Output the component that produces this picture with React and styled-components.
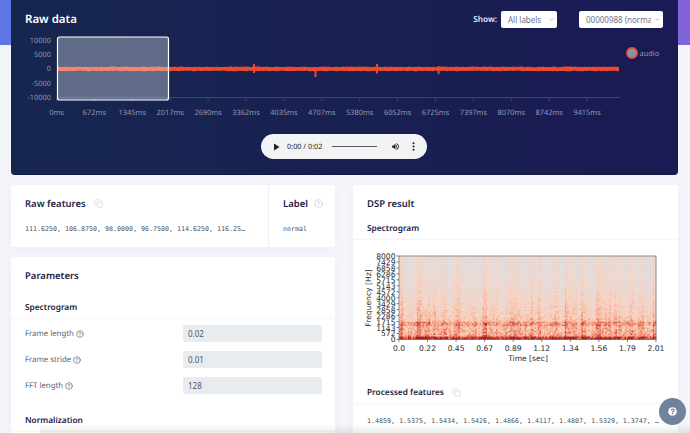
import React, { useMemo } from "react";
import styled, { createGlobalStyle } from "styled-components";
import { ChevronDown, CircleHelp, Copy } from "lucide-react";
import { FaQuestionCircle } from "react-icons/fa";

const GlobalStyle = createGlobalStyle`
  html, body {
    margin: 0;
    padding: 0;
    background: #f3f5fa;
    font-family: "Noto Sans", "Open Sans", sans-serif;
    text-rendering: geometricPrecision;
  }
`;

// Page shell
const Page = styled.div`
  position: relative;
  width: 690px;
  height: 433px;
  overflow: hidden;
  box-sizing: border-box;
  padding: 0 12px 0 11px;
  background: linear-gradient(90deg, #5f76e6, #8263dc) top / 100% 45px no-repeat,
    #f3f5fa;
`;

// Raw data panel
const Hero = styled.section`
  height: 175px;
  box-sizing: border-box;
  background: linear-gradient(90deg, #16274f, #1b1a54);
  border-bottom: 1px solid #111a3f;
  border-radius: 0 0 4px 4px;
`;

const HeroHeader = styled.div`
  display: flex;
  align-items: center;
  height: 38px;
  margin-bottom: -8px;
  padding: 0 15px 0 14px;
`;

const HeroTitle = styled.h1`
  flex: 1;
  margin: 0;
  font-size: 11.5px;
  font-weight: 600;
  color: #fff;
`;

const ShowLabel = styled.span`
  margin-right: 4px;
  font-size: 8.2px;
  font-weight: 600;
  color: #e6e8f0;
`;

const SelectWrap = styled.div`
  position: relative;
  width: ${(p) => p.$width}px;
  height: 17px;
  margin-left: ${(p) => p.$gap || 0}px;
`;

const Select = styled.select`
  display: block;
  width: 100%;
  height: 100%;
  padding: 0 12px 0 7px;
  border: none;
  border-radius: 2px;
  background: #fff;
  appearance: none;
  color: #6c7486;
  font-family: "Noto Sans", sans-serif;
  font-size: 8px;
`;

const SelectChevron = styled(ChevronDown)`
  position: absolute;
  top: 5px;
  right: 2px;
  color: #8a90a0;
  pointer-events: none;
`;

const ChartSvg = styled.svg`
  display: block;
  width: 667px;
  height: 96px;
`;

const Player = styled.div`
  display: flex;
  align-items: center;
  width: 166px;
  height: 25px;
  box-sizing: border-box;
  margin: 8px auto 0 250px;
  padding: 0 12.5px 0 12px;
  border-radius: 13px;
  background: #f1f3f4;
`;

const PlayerTime = styled.span`
  margin-left: 7px;
  font-size: 7.3px;
  color: #202124;
  white-space: nowrap;
`;

const PlayerTrack = styled.div`
  flex: 1;
  height: 1.5px;
  margin: 0 13.5px 0 10px;
  background: #55585c;
`;

const PlayerIcon = styled.svg`
  display: block;
  flex: none;
  margin-right: ${(p) => p.$gap || 0}px;
`;

// Lower columns
const Columns = styled.div`
  display: grid;
  grid-template-columns: 324px 325px;
  column-gap: 18px;
  margin-top: 10px;
`;

const Column = styled.div`
  display: flex;
  flex-direction: column;
  gap: 10px;
`;

const Card = styled.section`
  background: #fff;
  border-radius: 3px;
  box-shadow: 0 2px 10px rgba(40, 50, 90, 0.03);
`;

const FeaturesCard = styled(Card)`
  display: flex;
  height: 62px;
`;

const FeatureCell = styled.div`
  box-sizing: border-box;
  width: ${(p) => p.$width}px;
  padding: 10px 14px 0;
  border-right: ${(p) => (p.$divider ? "1px solid #eef0f4" : "none")};
`;

const CardTitle = styled.h2`
  display: flex;
  align-items: center;
  gap: 6px;
  height: 16px;
  margin: 0;
  font-size: 9.5px;
  font-weight: 600;
  color: #1d2443;
`;

const MonoText = styled.div`
  margin-top: 12px;
  overflow: hidden;
  font-family: "DejaVu Sans Mono", "Liberation Mono", monospace;
  font-size: 6.65px;
  line-height: 12px;
  color: #4a4f60;
  white-space: nowrap;
  text-overflow: ellipsis;
`;

const ParamsCard = styled(Card)`
  height: 176px;
  padding: 10px 0 0;
`;

const ParamsTitle = styled(CardTitle)`
  padding: 0 14px;
`;

const SectionTitle = styled.h3`
  display: flex;
  align-items: center;
  gap: 6px;
  height: 22px;
  margin: ${(p) => p.$top || 0}px 0 0;
  padding: 0 14px;
  border-bottom: 1px solid #f5f6f9;
  font-size: 8.3px;
  font-weight: 600;
  color: #1d2443;
`;

const Rows = styled.div`
  display: flex;
  flex-direction: column;
  gap: 9px;
  padding: 6px 13px 0 14px;
`;

const Row = styled.div`
  display: flex;
  align-items: center;
  justify-content: space-between;
`;

const RowLabel = styled.label`
  display: flex;
  align-items: center;
  gap: 2px;
  font-size: 7.8px;
  color: #5b6272;
`;

const RowInput = styled.input`
  width: 139px;
  height: 17px;
  box-sizing: border-box;
  padding: 0 5px;
  border: none;
  border-radius: 2px;
  background: #e9ecef;
  font-family: "Noto Sans", sans-serif;
  font-size: 8px;
  color: #4f566b;
`;

const DspCard = styled(Card)`
  height: 248px;
  padding-top: 10px;
`;

const DspTitle = styled(CardTitle)`
  padding: 0 14px;
`;

const SpectrogramSvg = styled.svg`
  display: block;
  width: 325px;
  height: 126px;
`;

const ProcessedText = styled(MonoText)`
  margin: 11px 17px 0 14px;
`;

const HintIcon = styled(CircleHelp)`
  flex: none;
  color: ${(p) => p.$color || "#5b6272"};
`;

const CopyIcon = styled(Copy)`
  flex: none;
  margin-left: 2px;
  color: #d6d9e0;
`;

// Things floating over the page
const HelpButton = styled.button`
  position: absolute;
  top: 398px;
  left: 659px;
  display: flex;
  align-items: center;
  justify-content: center;
  width: 27px;
  height: 27px;
  padding: 0;
  border: none;
  border-radius: 50%;
  background: #70839a;
  color: #fff;
`;

const BottomFade = styled.div`
  position: absolute;
  right: 0;
  bottom: 0;
  left: 40px;
  height: 9px;
  background: linear-gradient(180deg, rgba(60, 60, 70, 0), rgba(60, 60, 70, 0.1));
`;

const TIME_LABELS = [
  "0ms", "672ms", "1345ms", "2017ms", "2690ms", "3362ms", "4035ms", "4707ms",
  "5380ms", "6052ms", "6725ms", "7397ms", "8070ms", "8742ms", "9415ms",
];
const AMPLITUDES = [
  ["10000", 40], ["5000", 54.5], ["0", 68.5], ["-5000", 83], ["-10000", 97.5],
];
const FREQUENCIES = [
  "8000", "7429", "6858", "6286", "5715", "5143", "4572", "4000",
  "3429", "2858", "2286", "1715", "1143", "572", "0",
];
const SECONDS = ["0.0", "0.22", "0.45", "0.67", "0.89", "1.12", "1.34", "1.56", "1.79", "2.01"];
const SPIKES = [[254, 64, 73], [315.5, 67, 77], [377, 64, 73.5], [438.5, 66, 74]];

// Small seeded generator so the noise is the same on each render
const seeded = (seed) => () => {
  seed = (seed + 0x6d2b79f5) | 0;
  let t = Math.imul(seed ^ (seed >>> 15), 1 | seed);
  t = (t + Math.imul(t ^ (t >>> 7), 61 | t)) ^ t;
  return ((t ^ (t >>> 14)) >>> 0) / 4294967296;
};

const STOPS = [
  [0, [208, 214, 228]],
  [0.3, [226, 218, 218]],
  [0.5, [248, 208, 188]],
  [0.68, [247, 170, 142]],
  [0.84, [232, 96, 72]],
  [1, [160, 30, 26]],
];

const heatColor = (v) => {
  const value = Math.min(1, Math.max(0, v));
  let i = 0;
  while (i < STOPS.length - 2 && value > STOPS[i + 1][0]) i++;
  const [a, ca] = STOPS[i];
  const [b, cb] = STOPS[i + 1];
  const k = (value - a) / (b - a);
  const mix = ca.map((c, n) => Math.round(c + (cb[n] - c) * k));
  return `rgb(${mix.join(",")})`;
};

const buildCells = () => {
  const rand = seeded(988);
  const cols = 172;
  const rows = 56;
  const w = 257 / cols;
  const h = 83.5 / rows;
  // thin soft stripes with grey gaps between them
  const stripes = [];
  while (stripes.length < cols) {
    const level = rand();
    const run = 1 + Math.floor(rand() * 3);
    for (let i = 0; i < run; i++) stripes.push(level);
  }
  const cells = [];
  for (let c = 0; c < cols; c++) {
    const stripe = stripes[c] * stripes[c];
    for (let r = 0; r < rows; r++) {
      const depth = r / (rows - 1);
      let v = 0.28 + stripe * 0.2 + depth * depth * 0.38;
      v += (rand() - 0.5) * (0.04 + depth * 0.3);
      if (r >= 44 && r <= 46) v += 0.14;
      if (r >= 54) v += 0.2 + rand() * 0.12;
      cells.push(
        <rect
          key={`${c}-${r}`}
          x={399 + c * w}
          y={255 + r * h}
          width={w + 0.3}
          height={h + 0.3}
          fill={heatColor(v)}
        />
      );
    }
  }
  return cells;
};

const buildWave = () => {
  const rand = seeded(42);
  let top = "M57 68";
  let bottom = "";
  for (let x = 57; x <= 620; x += 2) {
    top += `L${x} ${(67.2 - rand() * 0.7).toFixed(1)}`;
    bottom = `L${x} ${(70.6 + rand() * 0.7).toFixed(1)}` + bottom;
  }
  return `${top}${bottom}Z`;
};

function WaveChart() {
  const wave = useMemo(buildWave, []);
  return (
    <ChartSvg viewBox="11 30 667 96">
      <line x1="57" x2="620" y1="97.5" y2="97.5" stroke="#39456e" />
      {TIME_LABELS.map((label, i) => (
        <g key={label}>
          <line
            x1={56.5 + i * 37.9}
            x2={56.5 + i * 37.9}
            y1="97.5"
            y2="101"
            stroke="#39456e"
          />
          <text
            x={56.5 + i * 37.9}
            y="114.5"
            textAnchor="middle"
            fontFamily="Noto Sans, sans-serif"
            fontSize="7.4"
            fill="#9199b1"
          >
            {label}
          </text>
        </g>
      ))}
      {AMPLITUDES.map(([label, y]) => (
        <text
          key={label}
          x="51"
          y={y + 2.6}
          textAnchor="end"
          fontFamily="Noto Sans, sans-serif"
          fontSize="7.4"
          fill="#9199b1"
        >
          {label}
        </text>
      ))}
      <path d={wave} fill="#ec4a2e" />
      {SPIKES.map(([x, y1, y2]) => (
        <line key={x} x1={x} x2={x} y1={y1} y2={y2} stroke="#ec4a2e" strokeWidth="2" />
      ))}
      <rect
        x="57.5"
        y="37"
        width="111"
        height="63"
        rx="2"
        fill="#fff"
        fillOpacity="0.32"
        stroke="#fff"
        strokeWidth="1.2"
      />
      <circle cx="632" cy="53" r="5.2" fill="#8a93a8" stroke="#ec4a2e" strokeWidth="1.6" />
      <text
        x="639.5"
        y="55.5"
        fontFamily="Noto Sans, sans-serif"
        fontSize="7.4"
        fill="#9199b1"
      >
        audio
      </text>
    </ChartSvg>
  );
}

function Spectrogram() {
  const cells = useMemo(buildCells, []);
  const tickFont = {
    fontFamily: "DejaVu Sans, sans-serif",
    fontSize: 7.6,
    fill: "#2a2a2a",
  };
  return (
    <SpectrogramSvg viewBox="353 239 325 126">
      <filter id="soften">
        <feGaussianBlur stdDeviation="0.35" />
      </filter>
      <g filter="url(#soften)">{cells}</g>
      <rect x="399" y="255" width="257" height="83.5" fill="none" stroke="#777" strokeWidth="0.8" />
      {FREQUENCIES.map((label, i) => (
        <g key={label}>
          <line
            x1="396.5"
            x2="399"
            y1={255 + i * 5.96}
            y2={255 + i * 5.96}
            stroke="#333"
            strokeWidth="0.6"
          />
          <text x="395.5" y={258 + i * 5.96} textAnchor="end" {...tickFont}>
            {label}
          </text>
        </g>
      ))}
      {SECONDS.map((label, i) => (
        <g key={label}>
          <line
            x1={399 + i * 28.55}
            x2={399 + i * 28.55}
            y1="338.5"
            y2="341"
            stroke="#333"
            strokeWidth="0.6"
          />
          <text x={399 + i * 28.55} y="350" textAnchor="middle" {...tickFont}>
            {label}
          </text>
        </g>
      ))}
      <text x="528" y="360" textAnchor="middle" {...tickFont}>
        Time [sec]
      </text>
      <text
        transform="translate(371 297) rotate(-90)"
        textAnchor="middle"
        {...tickFont}
      >
        Frequency [Hz]
      </text>
    </SpectrogramSvg>
  );
}

function AudioPlayer() {
  return (
    <Player>
      <PlayerIcon width="7" height="8" viewBox="0 0 7 8">
        <path d="M1 0.5 L6.5 4 L1 7.5 Z" fill="#202124" />
      </PlayerIcon>
      <PlayerTime>0:00 / 0:02</PlayerTime>
      <PlayerTrack />
      <PlayerIcon width="9" height="9" viewBox="0 0 24 24" $gap={12}>
        <path
          d="M3 9v6h4l5 5V4L7 9H3zm13.5 3A4.5 4.5 0 0 0 14 8v8a4.5 4.5 0 0 0 2.5-4zM14 3.2v2.1a7 7 0 0 1 0 13.4v2.1a9 9 0 0 0 0-17.6z"
          fill="#202124"
        />
      </PlayerIcon>
      <PlayerIcon width="3" height="9" viewBox="0 0 3 9">
        <circle cx="1.5" cy="1.2" r="1" fill="#202124" />
        <circle cx="1.5" cy="4.5" r="1" fill="#202124" />
        <circle cx="1.5" cy="7.8" r="1" fill="#202124" />
      </PlayerIcon>
    </Player>
  );
}

const PARAMETERS = [
  ["Frame length", "0.02"],
  ["Frame stride", "0.01"],
  ["FFT length", "128"],
];

export default function App() {
  return (
    <Page>
      <GlobalStyle />

      <Hero>
        <HeroHeader>
          <HeroTitle>Raw data</HeroTitle>
          <ShowLabel>Show:</ShowLabel>
          <SelectWrap $width={56}>
            <Select defaultValue="all">
              <option value="all">All labels</option>
            </Select>
            <SelectChevron size={7} />
          </SelectWrap>
          <SelectWrap $width={84} $gap={22}>
            <Select defaultValue="988">
              <option value="988">00000988 (normal)</option>
            </Select>
            <SelectChevron size={7} />
          </SelectWrap>
        </HeroHeader>
        <WaveChart />
        <AudioPlayer />
      </Hero>

      <Columns>
        <Column>
          <FeaturesCard>
            <FeatureCell $width={258} $divider>
              <CardTitle>
                Raw features
                <CopyIcon size={9} />
              </CardTitle>
              <MonoText>
                111.6250, 106.8750, 98.0000, 96.7500, 114.6250, 116.25…
              </MonoText>
            </FeatureCell>
            <FeatureCell $width={66}>
              <CardTitle>
                Label
                <HintIcon size={9} $color="#c9cdd6" />
              </CardTitle>
              <MonoText>normal</MonoText>
            </FeatureCell>
          </FeaturesCard>

          <ParamsCard>
            <ParamsTitle>Parameters</ParamsTitle>
            <SectionTitle $top={13}>Spectrogram</SectionTitle>
            <Rows>
              {PARAMETERS.map(([label, value]) => (
                <Row key={label}>
                  <RowLabel>
                    {label}
                    <HintIcon size={8} />
                  </RowLabel>
                  <RowInput readOnly value={value} />
                </Row>
              ))}
            </Rows>
            <SectionTitle $top={15}>Normalization</SectionTitle>
          </ParamsCard>
        </Column>

        <Column>
          <DspCard>
            <DspTitle>DSP result</DspTitle>
            <SectionTitle $top={6}>Spectrogram</SectionTitle>
            <Spectrogram />
            <SectionTitle $top={15}>
              Processed features
              <CopyIcon size={9} />
            </SectionTitle>
            <ProcessedText>
              1.4859, 1.5375, 1.5434, 1.5426, 1.4866, 1.4117, 1.4807, 1.5329, 1.3747, 1.5012, 1.4420
            </ProcessedText>
          </DspCard>
        </Column>
      </Columns>

      <BottomFade />
      <HelpButton aria-label="Help">
        <FaQuestionCircle size={9} />
      </HelpButton>
    </Page>
  );
}
